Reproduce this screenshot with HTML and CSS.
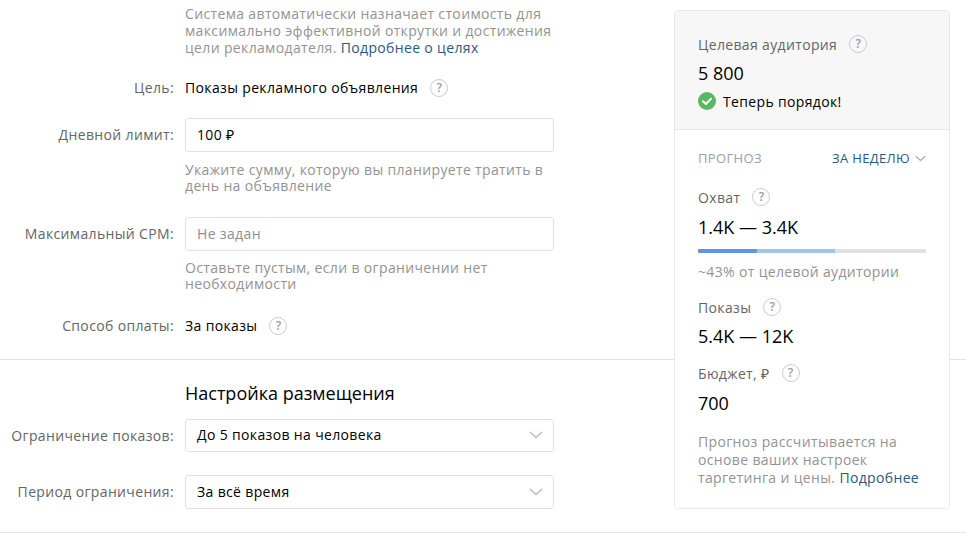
FILE: index.html
```html
<!DOCTYPE html>
<html lang="ru">
<head>
<meta charset="utf-8">
<title>Настройка объявления</title>
<link rel="stylesheet" href="styles.css">
</head>
<body>
<svg class="defs" width="0" height="0" aria-hidden="true">
  <symbol id="chev" viewBox="0 0 16 9"><path d="M1.5 1.5 8 7.5l6.5-6" fill="none" stroke="currentColor" stroke-width="1.8" stroke-linecap="round" stroke-linejoin="round"/></symbol>
</svg>
<main class="page">
  <section class="form">
    <div class="row row-note-top">
      <div class="label"></div>
      <p class="note note-top">Система автоматически назначает стоимость для максимально эффективной открутки и достижения цели рекламодателя. <a href="#">Подробнее о целях</a></p>
    </div>
    <div class="row row-goal">
      <div class="label">Цель:</div>
      <div class="value">Показы рекламного объявления <span class="help">?</span></div>
    </div>
    <div class="row row-limit">
      <div class="label">Дневной лимит:</div>
      <div class="field">100 ₽</div>
    </div>
    <div class="row row-hint">
      <div class="label"></div>
      <p class="note">Укажите сумму, которую вы планируете тратить в день на объявление</p>
    </div>
    <div class="row row-cpm">
      <div class="label">Максимальный CPM:</div>
      <div class="field field-empty">Не задан</div>
    </div>
    <div class="row row-hint2">
      <div class="label"></div>
      <p class="note">Оставьте пустым, если в ограничении нет необходимости</p>
    </div>
    <div class="row row-pay">
      <div class="label">Способ оплаты:</div>
      <div class="value">За показы <span class="help">?</span></div>
    </div>
    <hr class="rule rule-first">
    <div class="row row-title">
      <div class="label"></div>
      <h2 class="title">Настройка размещения</h2>
    </div>
    <div class="row row-select">
      <div class="label">Ограничение показов:</div>
      <div class="field field-select field-short">До 5 показов на человека <svg class="chev"><use href="#chev"/></svg></div>
    </div>
    <div class="row row-select2">
      <div class="label">Период ограничения:</div>
      <div class="field field-select">За всё время <svg class="chev"><use href="#chev"/></svg></div>
    </div>
    <hr class="rule rule-last">
  </section>

  <aside class="panel">
    <div class="panel-head">
      <div class="stat-label">Целевая аудитория <span class="help">?</span></div>
      <div class="stat-value aud">5 800</div>
      <div class="ok">
        <svg class="ok-icon" viewBox="0 0 18 18"><circle cx="9" cy="9" r="9" fill="#5cb860"/><path d="M5 9.2 7.9 12 13 6.8" fill="none" stroke="#fff" stroke-width="2" stroke-linecap="round" stroke-linejoin="round"/></svg>
        Теперь порядок!
      </div>
    </div>
    <div class="panel-body">
      <div class="forecast">
        <span class="forecast-title">ПРОГНОЗ</span>
        <span class="period">ЗА НЕДЕЛЮ <svg class="chev chev-small"><use href="#chev"/></svg></span>
      </div>
      <div class="stat-label reach">Охват <span class="help">?</span></div>
      <div class="stat-value">1.4K — 3.4K</div>
      <div class="bar"><span class="bar-a"></span><span class="bar-b"></span></div>
      <div class="share">~43% от целевой аудитории</div>
      <div class="stat-label shows">Показы <span class="help">?</span></div>
      <div class="stat-value shows-value">5.4K — 12K</div>
      <div class="stat-label budget">Бюджет, ₽ <span class="help">?</span></div>
      <div class="stat-value">700</div>
      <p class="note panel-note">Прогноз рассчитывается на основе ваших настроек таргетинга и цены. <a href="#">Подробнее</a></p>
    </div>
  </aside>
</main>
</body>
</html>
```
FILE: styles.css
```css
* { box-sizing: border-box; }
html, body { margin: 0; padding: 0; height: 100%; overflow: hidden; }
body { background: #fff; color: #000; font: 14px/17px "Open Sans", "Noto Sans", sans-serif; letter-spacing: 0.35px; }
.defs { position: absolute; }
a { color: #2a5885; text-decoration: none; }
.page { position: relative; height: 534px; overflow: hidden; }
.form { padding-top: 5px; }
.row { display: grid; grid-template-columns: 174px 369px; column-gap: 11px; align-items: center; }
.label { color: #656565; text-align: right; }
.value { display: flex; align-items: center; color: #000; }
.note { margin: 0; color: #939393; line-height: 16.5px; }
.note-top { line-height: 17px; }
.field { height: 34px; padding: 0 11px; border: 1px solid #dfe2e8; border-radius: 3px; display: flex; align-items: center; background: #fff; }
.field-empty { color: #8a8f96; }
.field-select { justify-content: space-between; padding-right: 10px; }
.field-short { height: 33px; padding-bottom: 1px; }
.chev { width: 14px; height: 8px; color: #c0c5cd; flex: none; }
.chev-small { width: 11px; height: 7px; margin-left: 5px; color: #a9b0bb; }
.help { display: inline-flex; align-items: center; justify-content: center; width: 18px; height: 18px; border: 1px solid #c5cdd9; border-radius: 50%; color: #959daa; font-size: 12px; font-weight: 600; line-height: 1; margin-left: 12px; letter-spacing: 0; flex: none; }
.row-note-top { align-items: start; }
.row-goal { margin-top: 22.5px; }
.row-limit { margin-top: 21px; }
.row-hint { margin-top: 10px; }
.row-cpm { margin-top: 22px; }
.row-hint2 { margin-top: 9px; }
.row-pay { margin-top: 24px; }
.rule { margin: 0; border: 0; border-top: 1px solid #e2e5e9; }
.rule-first { margin-top: 24px; }
.row-title { margin-top: 21px; }
.title { margin: 0; font-size: 18px; line-height: 24px; font-weight: 400; letter-spacing: 0; color: #000; }
.row-select { margin-top: 14px; }
.row-select2 { margin-top: 23px; }
.rule-last { margin-top: 23px; }
.panel { position: absolute; left: 674px; top: 10px; width: 276px; height: 499px; background: #fff; border: 1px solid #e7e8ec; border-radius: 4px; overflow: hidden; }
.panel-head { height: 119px; background: #f7f7f8; border-bottom: 1px solid #e7e8ec; padding: 24px 23px 0; }
.panel-body { padding: 0 23px; }
.stat-label { display: flex; align-items: center; color: #656565; height: 18px; }
.stat-value { font-size: 18px; line-height: 22px; letter-spacing: 0; color: #000; margin-top: 10px; }
.aud { margin-top: 9px; }
.ok { display: flex; align-items: center; margin-top: 8px; color: #000; }
.ok-icon { width: 18px; height: 18px; margin-right: 7px; flex: none; }
.forecast { display: flex; justify-content: space-between; align-items: center; margin-top: 19px; font-size: 13px; line-height: 18px; }
.forecast-title { color: #98a0ac; }
.period { color: #2a5885; display: flex; align-items: center; }
.reach { margin-top: 21px; }
.bar { display: flex; height: 4px; margin-top: 11px; background: #dde1e6; border-radius: 1px; overflow: hidden; }
.bar-a { width: 59px; background: #5d97e0; }
.bar-b { width: 78px; background: #a0c4f0; }
.share { margin-top: 10px; color: #939393; }
.shows { margin-top: 18px; }
.shows-value { margin-top: 9px; }
.budget { margin-top: 17px; }
.panel-note { margin-top: 19px; line-height: 18px; }
```
